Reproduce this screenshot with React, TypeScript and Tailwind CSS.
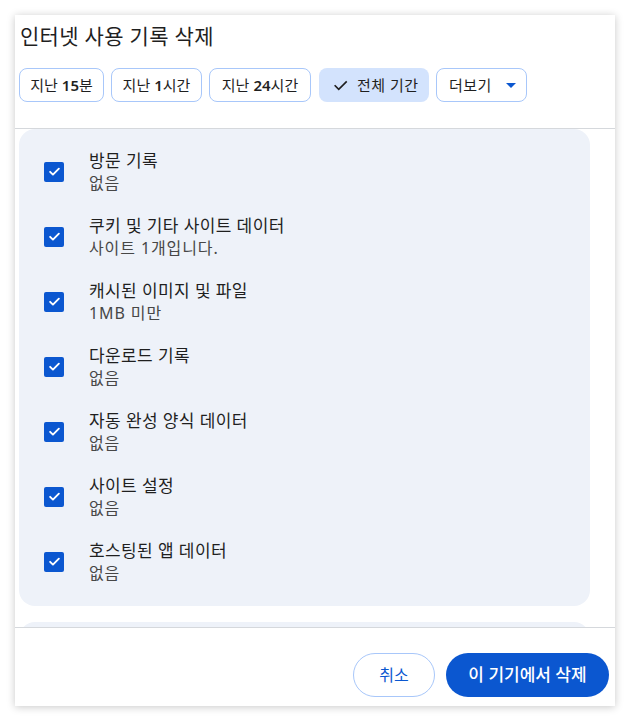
import React from "react";

const FONT = { fontFamily: '"Noto Sans", "Noto Sans CJK KR", sans-serif' };

const items: [string, string][] = [
  ["방문 기록", "없음"],
  ["쿠키 및 기타 사이트 데이터", "사이트 1개입니다."],
  ["캐시된 이미지 및 파일", "1MB 미만"],
  ["다운로드 기록", "없음"],
  ["자동 완성 양식 데이터", "없음"],
  ["사이트 설정", "없음"],
  ["호스팅된 앱 데이터", "없음"],
];

function Checkbox() {
  return (
    <div className="w-[20px] h-[20px] rounded-[2px] bg-[#0b57d0] flex items-center justify-center shrink-0">
      <svg width="15" height="15" viewBox="0 0 24 24" fill="none">
        <path d="M5 12.5l4.5 4.5L19 7.5" stroke="white" strokeWidth="3" strokeLinecap="round" strokeLinejoin="round" />
      </svg>
    </div>
  );
}

function Chip({ children, selected, className }: { children: React.ReactNode; selected?: boolean; className?: string }) {
  return (
    <div
      className={
        (selected
          ? "h-[34px] rounded-[8px] bg-[#d3e3fd] flex items-center text-[15px] text-[#1f1f1f] "
          : "h-[34px] rounded-[8px] border border-[#a8c7fa] flex items-center text-[15px] text-[#1f1f1f] ") + (className ?? "")
      }
    >
      {children}
    </div>
  );
}

export default function App() {
  return (
    <div className="w-[631px] h-[721px] bg-white pt-[15px] pl-[15px]" style={FONT}>
      <div className="w-[600px] h-[691px] bg-white flex flex-col shadow-[0_1px_8px_rgba(0,0,0,0.22)]">
        <div className="px-[4px] pt-[7px] pb-[26px]">
          <div className="h-[28px] pl-[1px] text-[21px] leading-[28px] text-[#1f1f1f] tracking-[0.3px]">인터넷 사용 기록 삭제</div>
          <div className="mt-[18px] flex gap-[7px]">
            <Chip className="w-[85px] justify-center">지난 <span className="font-semibold ml-[4px]">15</span>분</Chip>
            <Chip className="w-[91px] justify-center">지난 <span className="font-semibold ml-[4px]">1</span>시간</Chip>
            <Chip className="w-[102px] justify-center">지난 <span className="font-semibold ml-[4px]">24</span>시간</Chip>
            <Chip selected className="w-[110px] pl-[13px] gap-[8px] ml-[1px]">
              <svg width="17" height="17" viewBox="0 0 24 24" fill="none">
                <path d="M4.5 12.5l5 5L20 7" stroke="#1f1f1f" strokeWidth="2.3" strokeLinecap="square" />
              </svg>
              <span className="tracking-[0.5px]">전체 기간</span>
            </Chip>
            <Chip className="w-[91px] pl-[12px]">
              <span className="tracking-[0.5px]">더보기</span>
              <span className="ml-[14px] w-0 h-0 border-l-[5px] border-r-[5px] border-t-[5px] border-l-transparent border-r-transparent border-t-[#0b57d0]" />
            </Chip>
          </div>
        </div>
        <div className="h-[499px] border-t border-[#d5d8dc] overflow-hidden">
          <div className="pl-[4px] pr-[25px] flex flex-col gap-[16px]">
            <div className="rounded-[16px] bg-[#eef2f9] pt-[10px] pb-[12px]">
              {items.map(([t, s]) => (
                <div key={t} className="flex items-center py-[10px]">
                  <div className="w-[70px] pl-[25px] flex">
                    <Checkbox />
                  </div>
                  <div className="flex flex-col">
                    <div className="text-[17px] leading-[24px] text-[#1f1f1f] tracking-[0.4px]">{t}</div>
                    <div className="text-[16px] leading-[21px] text-[#474747] tracking-[0.9px]">{s}</div>
                  </div>
                </div>
              ))}
            </div>
            <div className="rounded-[16px] bg-[#eef2f9] h-[200px]" />
          </div>
        </div>
        <div className="border-t border-[#d5d8dc] flex justify-end gap-[11px] pt-[25px] pr-[6px]">
          <button className="h-[44px] w-[82px] rounded-full border border-[#a8c7fa] text-[#0b57d0] text-[16px]">취소</button>
          <button className="h-[44px] w-[163px] rounded-full bg-[#0b57d0] text-white text-[17px] font-medium">이 기기에서 삭제</button>
        </div>
      </div>
    </div>
  );
}
